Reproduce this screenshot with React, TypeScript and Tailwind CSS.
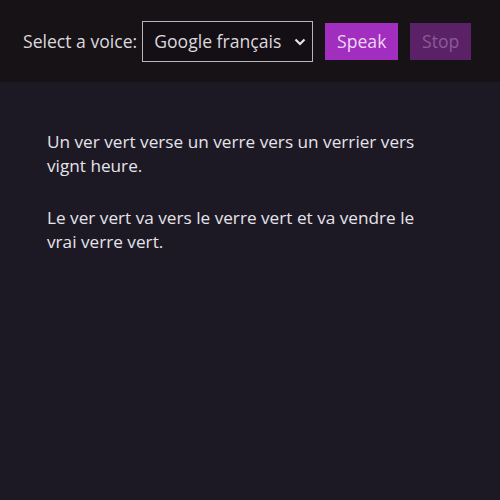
import React from "react";

const App = () => {
  return (
    <main
      className="w-[500px] h-[500px] bg-[#1c1924] text-[#e6e3ea]"
      style={{ fontFamily: '"Open Sans", "Noto Sans", sans-serif' }}
    >
      <header className="h-[82px] bg-[#171216] flex items-center pl-[23px] gap-[12px]">
        <label className="text-[17.6px] text-[#dcd9de] flex items-center gap-[5px]">
          Select a voice:
          <span className="relative flex items-center h-[41px] w-[171px] border border-[#b9b6bb] bg-[#140f14] pl-[11px]">
            <span className="text-[17.6px] text-[#dcd9de]">Google français</span>
            <svg
              className="absolute right-[6px] top-[16px]"
              width="12"
              height="8"
              viewBox="0 0 12 8"
              fill="none"
              stroke="#e6e3ea"
              strokeWidth="2.2"
            >
              <path d="M1.5 1.5 L6 6 L10.5 1.5" />
            </svg>
          </span>
        </label>
        <button className="h-[37px] w-[73px] bg-[#a22ec0] text-[#edd6f3] text-[17.6px]">
          Speak
        </button>
        <button className="h-[37px] w-[61px] bg-[#5b2167] text-[#8a5b95] text-[17.6px]">
          Stop
        </button>
      </header>
      <section className="pl-[47px] pt-[48px] w-[442px] text-[17.2px] leading-[24px]">
        <p>Un ver vert verse un verre vers un verrier vers vignt heure.</p>
        <p className="mt-[28px]">
          Le ver vert va vers le verre vert et va vendre le vrai verre vert.
        </p>
      </section>
    </main>
  );
};

export default App;
